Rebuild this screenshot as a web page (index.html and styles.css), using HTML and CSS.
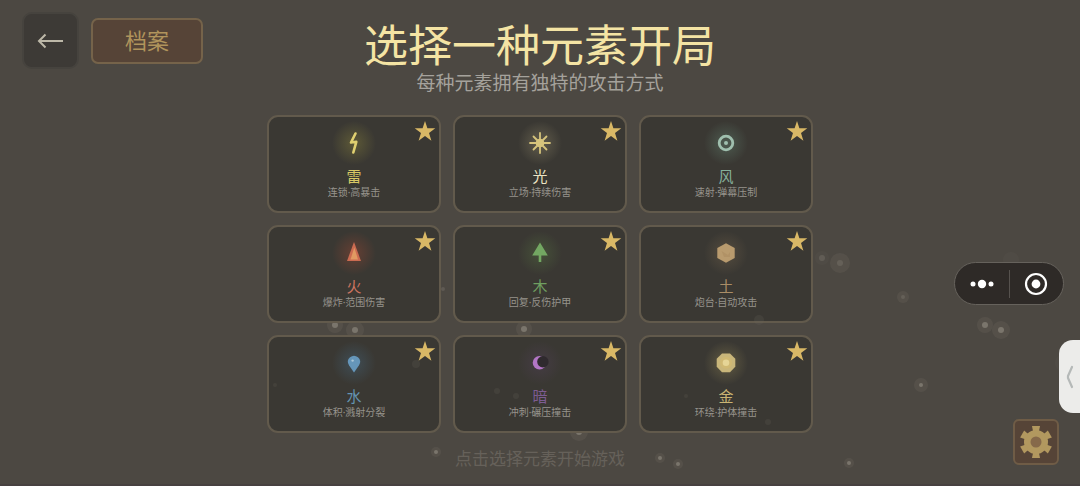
FILE: index.html
```html
<!DOCTYPE html>
<html lang="zh-CN">
<head>
    <meta charset="UTF-8">
    <meta name="viewport" content="width=device-width, initial-scale=1.0">
    <title>选择元素</title>
    <link rel="stylesheet" href="styles.css">
</head>
<body>
    <!-- 背景漂浮粒子 -->
    <svg class="particles" viewBox="0 0 1080 486" preserveAspectRatio="xMidYMid slice" aria-hidden="true">
        <g class="halo">
            <circle cx="335" cy="326" r="8"/>
            <circle cx="355" cy="331" r="9"/>
            <circle cx="524" cy="330" r="8"/>
            <circle cx="579" cy="433" r="9"/>
            <circle cx="436" cy="453" r="5"/>
            <circle cx="660" cy="459" r="5"/>
            <circle cx="678" cy="465" r="5"/>
            <circle cx="849" cy="464" r="5"/>
            <circle cx="840" cy="264" r="10"/>
            <circle cx="903" cy="298" r="6"/>
            <circle cx="985" cy="326" r="8"/>
            <circle cx="1001" cy="331" r="9"/>
            <circle cx="921" cy="386" r="7"/>
        </g>
        <g class="halo dim">
            <circle cx="822" cy="259" r="7"/>
            <circle cx="1011" cy="261" r="8"/>
            <circle cx="1064" cy="364" r="9"/>
        </g>
        <g class="dot">
            <circle cx="335" cy="326" r="3"/>
            <circle cx="355" cy="331" r="3"/>
            <circle cx="524" cy="330" r="3"/>
            <circle cx="579" cy="433" r="3"/>
            <circle cx="436" cy="453" r="2"/>
            <circle cx="660" cy="459" r="2"/>
            <circle cx="678" cy="465" r="2"/>
            <circle cx="849" cy="464" r="2"/>
            <circle cx="985" cy="326" r="3"/>
            <circle cx="1001" cy="331" r="3"/>
            <circle cx="921" cy="386" r="2"/>
        </g>
        <g class="dot dim">
            <circle cx="443" cy="290" r="2"/>
            <circle cx="903" cy="298" r="2"/>
            <circle cx="822" cy="259" r="3"/>
            <circle cx="840" cy="264" r="3"/>
        </g>
    </svg>

    <header class="header">
        <div class="header-actions">
            <button class="back-btn" aria-label="返回">
                <svg width="28" height="20" viewBox="0 0 28 20"><path d="M26 10H2M8.5 3.5L2 10L8.5 16.5"/></svg>
            </button>
            <button class="archive-btn">档案</button>
        </div>
        <div class="header-title">
            <h1>选择一种元素开局</h1>
            <p>每种元素拥有独特的攻击方式</p>
        </div>
    </header>

    <svg class="defs" aria-hidden="true">
        <symbol id="star" viewBox="0 0 24 24">
            <path d="M12 2L14.4 9.3H22.3L16 13.9L18.4 21.8L12 17L5.6 21.8L8 13.9L1.7 9.3H9.6Z"/>
        </symbol>
    </svg>

    <main>
        <div class="elements">
            <button class="card thunder">
                <svg class="star"><use href="#star"/></svg>
                <svg class="icon" viewBox="0 0 44 44">
                    <path class="line" d="M23.5 12.5L19 21.5L24.3 20.8L21.3 31.5"/>
                </svg>
                <span class="name">雷</span>
                <span class="desc">连锁·高暴击</span>
            </button>
            <button class="card light">
                <svg class="star"><use href="#star"/></svg>
                <svg class="icon" viewBox="0 0 44 44">
                    <circle cx="22" cy="22" r="4.3"/>
                    <path class="line" d="M22 12V32M12 22H32M15.5 15.5L28.5 28.5M28.5 15.5L15.5 28.5"/>
                </svg>
                <span class="name">光</span>
                <span class="desc">立场·持续伤害</span>
            </button>
            <button class="card wind">
                <svg class="star"><use href="#star"/></svg>
                <svg class="icon" viewBox="0 0 44 44">
                    <circle class="ring" cx="22" cy="22" r="6.8"/>
                    <circle cx="22" cy="22" r="2"/>
                </svg>
                <span class="name">风</span>
                <span class="desc">速射·弹幕压制</span>
            </button>
            <button class="card fire">
                <svg class="star"><use href="#star"/></svg>
                <svg class="icon" viewBox="0 0 44 44">
                    <path d="M22 11L29 30H15Z"/>
                    <path class="inner" d="M22.3 16.5L26 28.5H18.5Z"/>
                </svg>
                <span class="name">火</span>
                <span class="desc">爆炸·范围伤害</span>
            </button>
            <button class="card wood">
                <svg class="star"><use href="#star"/></svg>
                <svg class="icon" viewBox="0 0 44 44">
                    <path d="M22 11.5L29.8 24.5H23.3V31H20.7V24.5H14.2Z"/>
                </svg>
                <span class="name">木</span>
                <span class="desc">回复·反伤护甲</span>
            </button>
            <button class="card earth">
                <svg class="star"><use href="#star"/></svg>
                <svg class="icon" viewBox="0 0 44 44">
                    <path d="M22 12.2L30.7 17V27L22 31.8L13.3 27V17Z"/>
                    <path class="inner" d="M17.5 20L24 24L26 21V26H20Z"/>
                </svg>
                <span class="name">土</span>
                <span class="desc">炮台·自动攻击</span>
            </button>
            <button class="card water">
                <svg class="star"><use href="#star"/></svg>
                <svg class="icon" viewBox="0 0 44 44">
                    <path d="M22 31.5L17 24.2A6 6 0 1 1 27 24.2Z"/>
                    <circle class="inner" cx="20.6" cy="19.6" r="1.2"/>
                </svg>
                <span class="name">水</span>
                <span class="desc">体积·溅射分裂</span>
            </button>
            <button class="card dark">
                <svg class="star"><use href="#star"/></svg>
                <svg class="icon" viewBox="0 0 44 44">
                    <circle cx="21.5" cy="21.7" r="6.8"/>
                    <circle class="inner" cx="24.9" cy="20.7" r="5.7"/>
                </svg>
                <span class="name">暗</span>
                <span class="desc">冲刺·碾压撞击</span>
            </button>
            <button class="card gold">
                <svg class="star"><use href="#star"/></svg>
                <svg class="icon" viewBox="0 0 44 44">
                    <path d="M18 12.5H26L31.3 17.8V25.8L26 31.2H18L12.7 25.8V17.8Z"/>
                    <circle class="mid" cx="22" cy="21.8" r="6"/>
                    <circle class="inner" cx="22" cy="21.8" r="3.3"/>
                </svg>
                <span class="name">金</span>
                <span class="desc">环绕·护体撞击</span>
            </button>
        </div>
        <p class="hint">点击选择元素开始游戏</p>
    </main>

    <!-- 卡片上方的微弱粒子 -->
    <svg class="particles front" viewBox="0 0 1080 486" preserveAspectRatio="xMidYMid slice" aria-hidden="true">
        <circle cx="275" cy="386" r="2"/>
        <circle cx="416" cy="365" r="4"/>
        <circle cx="497" cy="392" r="3"/>
        <circle cx="516" cy="397" r="3"/>
        <circle cx="686" cy="397" r="2"/>
        <circle cx="768" cy="423" r="3"/>
        <circle cx="759" cy="321" r="5"/>
    </svg>

    <div class="capsule">
        <button class="capsule-btn" aria-label="更多">
            <svg width="24" height="24" viewBox="0 0 24 24">
                <circle cx="3" cy="12" r="2.5"/>
                <circle cx="12" cy="12" r="4.2"/>
                <circle cx="21" cy="12" r="2.5"/>
            </svg>
        </button>
        <button class="capsule-btn" aria-label="关闭">
            <svg width="24" height="24" viewBox="0 0 24 24">
                <circle class="ring" cx="12" cy="12" r="10"/>
                <circle cx="12" cy="12" r="4.4"/>
            </svg>
        </button>
    </div>

    <button class="side-tab" aria-label="展开">
        <svg width="8" height="24" viewBox="0 0 8 24"><path d="M6 2L2 11V13L6 22"/></svg>
    </button>

    <button class="settings-btn" aria-label="设置">
        <svg width="36" height="36" viewBox="-18 -18 36 36">
            <circle r="12"/>
            <path id="tooth" d="M-2.8 -10L-4 -16H4L2.8 -10Z"/>
            <use href="#tooth" transform="rotate(60)"/>
            <use href="#tooth" transform="rotate(120)"/>
            <use href="#tooth" transform="rotate(180)"/>
            <use href="#tooth" transform="rotate(240)"/>
            <use href="#tooth" transform="rotate(300)"/>
            <circle class="hole" r="5.5"/>
        </svg>
    </button>
</body>
</html>
```
FILE: styles.css
```css
* {
    box-sizing: border-box;
}
body {
    margin: 0;
    min-height: 100vh;
    font-family: "Noto Sans CJK SC", "Noto Sans", sans-serif;
    background-color: #4c4842;
    border-bottom: 2px solid #474140;
    overflow: hidden;
    position: relative;
}
button {
    font-family: inherit;
    padding: 0;
    cursor: pointer;
}
h1, p {
    margin: 0;
    font-weight: normal;
}
.defs {
    display: none;
}

/* 粒子 */
.particles {
    position: absolute;
    top: 0;
    left: 0;
    width: 100%;
    height: 100%;
    z-index: -1;
}
.particles.front {
    z-index: 1;
    pointer-events: none;
    fill: #6b655c;
    opacity: 0.2;
}
.halo {
    fill: #6b655c;
    opacity: 0.3;
}
.dot {
    fill: #8b867b;
    opacity: 0.7;
}
.halo.dim {
    opacity: 0.12;
}
.dot.dim {
    opacity: 0.3;
}

/* 顶部 */
.header {
    display: grid;
    grid-template-columns: 1fr auto 1fr;
    padding: 12px 22px 0;
}
.header-actions {
    display: flex;
    align-items: center;
    align-self: start;
    gap: 12px;
}
.back-btn {
    display: grid;
    place-items: center;
    width: 57px;
    height: 57px;
    background-color: #3d3a36;
    border: 2px solid #46433e;
    border-radius: 10px;
}
.back-btn svg {
    fill: none;
    stroke: #bdb8a8;
    stroke-width: 2;
}
.archive-btn {
    width: 112px;
    height: 46px;
    padding-bottom: 4px;
    font-size: 22px;
    line-height: 32px;
    color: #b0945c;
    background-color: #564437;
    border: 2px solid #75634a;
    border-radius: 7px;
}
.header-title {
    padding-top: 8px;
    text-align: center;
}
.header-title h1 {
    font-size: 44px;
    line-height: 46px;
    color: #f4e4a4;
}
.header-title p {
    margin-top: 4px;
    font-size: 19px;
    line-height: 24px;
    color: #a5a29c;
}

/* 元素卡片 */
.elements {
    display: grid;
    grid-template-columns: repeat(3, 174px);
    justify-content: center;
    gap: 12px;
    margin-top: 21px;
}
.card {
    position: relative;
    display: flex;
    flex-direction: column;
    align-items: center;
    min-height: 98px;
    padding: 4px 8px 12px;
    background-color: #3a3833;
    border: 2px solid #625a4c;
    border-radius: 11px;
}
.card:hover {
    background-color: #423f39;
}
.star {
    position: absolute;
    top: 2px;
    right: 2px;
    width: 24px;
    height: 24px;
    fill: #d9b866;
}
.icon {
    width: 44px;
    height: 44px;
    border-radius: 50%;
    fill: currentColor;
}
.icon .line {
    fill: none;
    stroke: currentColor;
    stroke-width: 2.6;
    stroke-linecap: round;
    stroke-linejoin: round;
}
.icon .ring {
    fill: none;
    stroke: currentColor;
    stroke-width: 2.8;
}
.name {
    margin-top: 2px;
    font-size: 15px;
    line-height: 18px;
}
/* 间隔点用西文字体，避免占满全角 */
.desc {
    font-family: "Noto Sans", "Noto Sans CJK SC", sans-serif;
    font-size: 10px;
    line-height: 14px;
    color: #96938c;
}

.thunder .icon {
    color: #e0d070;
    background: radial-gradient(circle closest-side, #5d5937, #3a3833);
}
.thunder .name {
    color: #d8c865;
}
.light .icon {
    color: #d6c47c;
    background: radial-gradient(circle closest-side, #625d4c, #3a3833);
}
.light .line {
    stroke-width: 1.8;
}
.light .name {
    color: #ece4c4;
}
.wind .icon {
    color: #9fbfae;
    background: radial-gradient(circle closest-side, #4d5b50, #3a3833);
}
.wind .name {
    color: #86b09c;
}
.fire .icon {
    color: #cb6b51;
    background: radial-gradient(circle closest-side, #653f33, #3a3833);
}
.fire .inner {
    fill: #e19a62;
}
.fire .name {
    color: #cc7460;
}
.wood .icon {
    color: #73a762;
    background: radial-gradient(circle closest-side, #465139, #3a3833);
}
.wood .name {
    color: #6f9f60;
}
.earth .icon {
    color: #b99b6e;
    background: radial-gradient(circle closest-side, #554c3e, #3a3833);
}
.earth .inner {
    fill: #b19266;
}
.earth .name {
    color: #a98d66;
}
.water .icon {
    color: #6596ba;
    background: radial-gradient(circle closest-side, #3f4d55, #3a3833);
}
.water .inner {
    fill: #a9c6d8;
}
.water .name {
    color: #6493b0;
}
.dark .icon {
    color: #b376c6;
    background: radial-gradient(circle closest-side, #453c44, #3a3833);
}
.dark .inner {
    fill: #2f2a2e;
}
.dark .name {
    color: #7d5c92;
}
.gold .icon {
    color: #c9b67a;
    background: radial-gradient(circle closest-side, #625b42, #3a3833);
}
.gold .mid {
    fill: #d0b973;
}
.gold .inner {
    fill: #e6d596;
}
.gold .name {
    color: #c9b473;
}

.hint {
    margin-top: 13px;
    font-size: 17px;
    line-height: 24px;
    text-align: center;
    color: #66615a;
}

/* 右侧悬浮控件 */
.capsule {
    position: absolute;
    top: 262px;
    right: 16px;
    display: flex;
    align-items: center;
    width: 110px;
    height: 43px;
    background-color: #2e2a27;
    border: 1px solid #66625c;
    border-radius: 22px;
}
.capsule-btn {
    flex: 1;
    display: grid;
    place-items: center;
    height: 28px;
    background: none;
    border: none;
}
.capsule-btn + .capsule-btn {
    border-left: 1px solid #56524e;
}
.capsule svg {
    fill: #fff;
}
.capsule .ring {
    fill: none;
    stroke: #fff;
    stroke-width: 2.2;
}
.side-tab {
    position: absolute;
    top: 340px;
    right: 0;
    display: grid;
    place-items: center;
    width: 21px;
    height: 73px;
    background-color: #ececea;
    border: none;
    border-radius: 14px 0 0 14px;
}
.side-tab svg {
    fill: none;
    stroke: #b5b9b8;
    stroke-width: 2.2;
    stroke-linecap: round;
}
.settings-btn {
    position: absolute;
    right: 21px;
    bottom: 19px;
    display: grid;
    place-items: center;
    width: 46px;
    height: 46px;
    background-color: #564437;
    border: 2px solid #6f5c46;
    border-radius: 6px;
}
.settings-btn svg {
    fill: #b2985f;
}
.settings-btn .hole {
    fill: #86694a;
}
```
